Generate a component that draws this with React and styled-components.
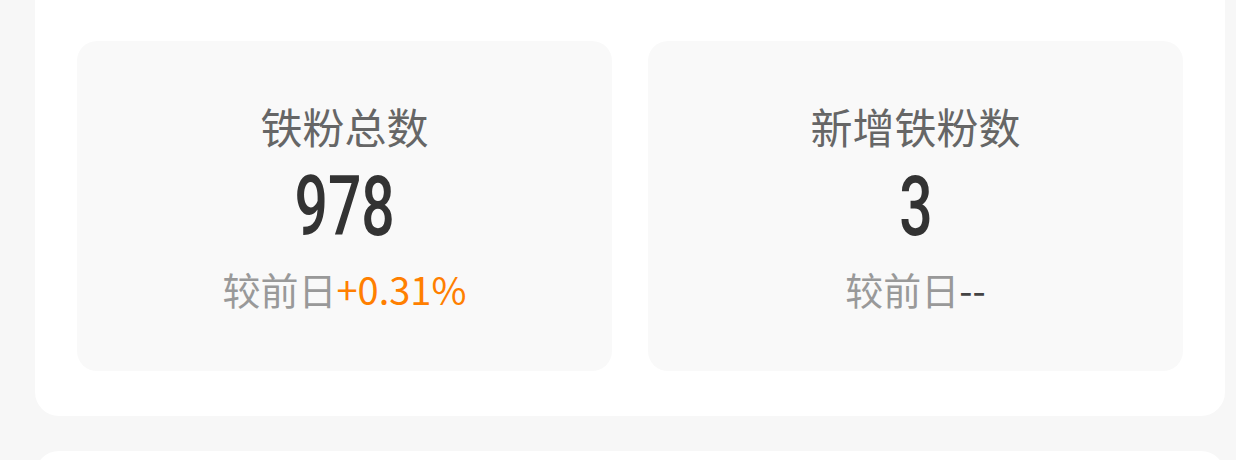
import React from 'react';
import styled, { createGlobalStyle } from 'styled-components';

const GlobalStyle = createGlobalStyle`
  html, body {
    margin: 0;
    padding: 0;
    background: #f7f7f7;
    font-family: "Noto Sans CJK SC", "Noto Sans", sans-serif;
  }
`;

const Page = styled.div`
  display: flex;
  flex-direction: column;
  gap: 35px;
  padding: 0 11px 0 35px;
  height: 460px;
  overflow: hidden;
  box-sizing: border-box;
`;

const Card = styled.div`
  background: #ffffff;
  border-radius: ${props => (props.$clipped ? '0 0 24px 24px' : '24px')};
  padding: ${props => (props.$clipped ? '41px 42px 45px' : '24px 42px')};
  flex-shrink: 0;
  min-height: ${props => (props.$clipped ? 'auto' : '120px')};
`;

const StatGrid = styled.div`
  display: grid;
  grid-template-columns: 1fr 1fr;
  gap: 36px;
`;

const StatBox = styled.div`
  background: #f9f9f9;
  border-radius: 20px;
  height: 330px;
  box-sizing: border-box;
  padding-top: 64px;
  display: flex;
  flex-direction: column;
  align-items: center;
`;

const Label = styled.div`
  font-size: 42px;
  line-height: 42px;
  color: #666666;
`;

const Value = styled.div`
  margin-top: 18px;
  font-family: Roboto, "Liberation Sans", sans-serif;
  font-weight: 500;
  font-size: 84px;
  line-height: 84px;
  color: #333333;
  transform: scaleX(0.7);
`;

const Compare = styled.div`
  margin-top: 21px;
  font-size: 38px;
  line-height: 38px;
  color: #999999;
`;

const Delta = styled.span`
  color: ${props => (props.$up ? '#ff7f00' : '#444444')};
`;

const stats = [
  { label: '铁粉总数', value: '978', delta: '+0.31%', up: true },
  { label: '新增铁粉数', value: '3', delta: '--', up: false },
];

const App = () => (
  <>
    <GlobalStyle />
    <Page>
      <Card $clipped>
        <StatGrid>
          {stats.map(s => (
            <StatBox key={s.label}>
              <Label>{s.label}</Label>
              <Value>{s.value}</Value>
              <Compare>
                较前日<Delta $up={s.up}>{s.delta}</Delta>
              </Compare>
            </StatBox>
          ))}
        </StatGrid>
      </Card>
      <Card />
    </Page>
  </>
);

export default App;
